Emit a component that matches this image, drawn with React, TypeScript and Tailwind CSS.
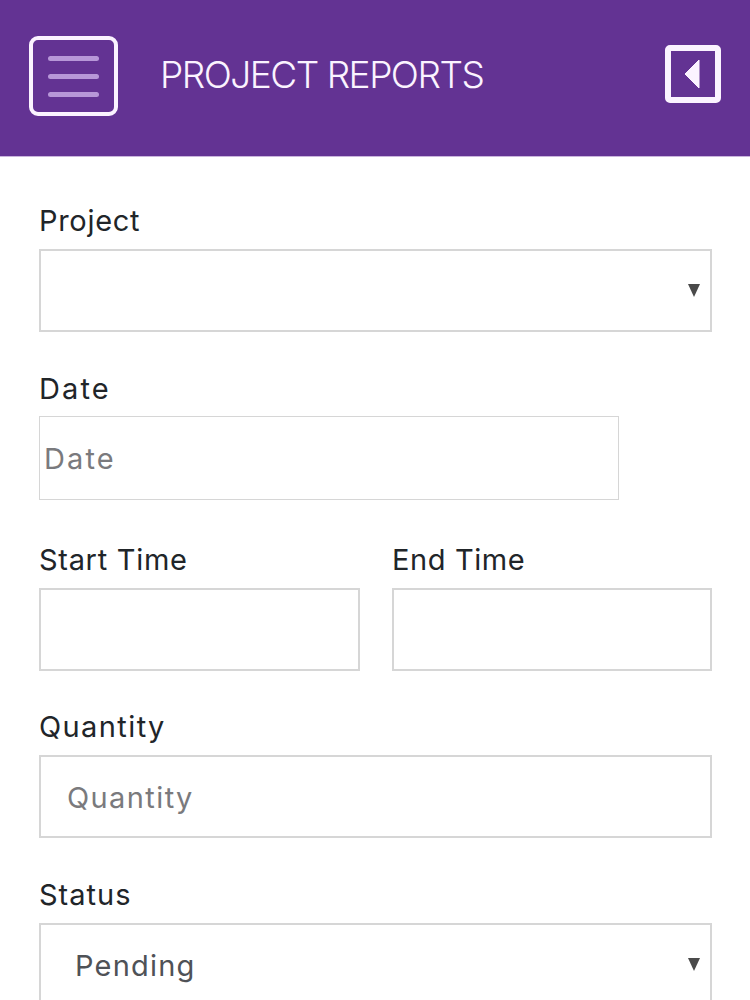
export default function App() {
  const label = "block h-[42px] text-[29px] leading-[44px] text-[#212529]";
  const box = "h-[83px] border-2 border-[#d6d6d6] bg-white flex items-center";
  const Caret = () => (
    <svg width="12" height="13" viewBox="0 0 12 13" className="ml-auto mr-[10px] shrink-0">
      <path d="M0 0H12L6 13Z" fill="#4a4a4a" />
    </svg>
  );
  return (
    <div className="w-[750px] h-[1000px] overflow-hidden bg-white font-['Inter','Liberation_Sans',sans-serif]">
      <header className="h-[157px] bg-[#633393] flex items-center border-b border-[#c9b4dc]">
        <div className="ml-[29px] w-[89px] h-[80px] rounded-[9px] border-[4px] border-[#fbf3ff] flex flex-col items-center justify-center gap-[13px] mt-[-4px]">
          <span className="w-[51px] h-[5px] rounded-full bg-[#b797d8]" />
          <span className="w-[51px] h-[5px] rounded-full bg-[#b797d8]" />
          <span className="w-[51px] h-[5px] rounded-full bg-[#b797d8]" />
        </div>
        <h1 className="ml-[42px] text-[37px] leading-none font-[350] text-[#fbf3ff] tracking-[-1.5px] mt-[-8px] whitespace-nowrap">PROJECT REPORTS</h1>
        <div className="ml-auto mr-[29px] mt-[-9px] w-[56px] h-[58px] rounded-[5px] border-[6px] border-[#fbf3ff] flex items-center justify-center">
          <svg width="16" height="30" viewBox="0 0 16 30" className="mr-[2px]">
            <path d="M15 1V29L1 15Z" fill="#fbf3ff" stroke="#fbf3ff" strokeLinejoin="round" />
          </svg>
        </div>
      </header>
      <main className="pl-[39px] pr-[38px] pt-[42px] flex flex-col">
        <label className={`${label} tracking-[0.7px]`}>Project</label>
        <div className={`${box} mt-[8px]`}><Caret /></div>

        <label className={`${label} mt-[35px] tracking-[2.1px]`}>Date</label>
        <div className={`${box} h-[84px] w-[580px] mt-[7px] border-[1.5px] pl-[4px]`}>
          <span className="mt-[2px] text-[29px] text-[#7a7a7d] tracking-[2.1px]">Date</span>
        </div>

        <div className="flex gap-[32px] mt-[38px]">
          <div className="w-[321px]">
            <label className={`${label} tracking-[0.7px]`}>Start Time</label>
            <div className={`${box} mt-[8px]`} />
          </div>
          <div className="w-[320px]">
            <label className={`${label} tracking-[0.6px]`}>End Time</label>
            <div className={`${box} mt-[8px]`} />
          </div>
        </div>

        <label className={`${label} mt-[34px] tracking-[1.4px]`}>Quantity</label>
        <div className={`${box} mt-[8px] pl-[26px]`}>
          <span className="mt-[2px] text-[29px] text-[#7a7a7d] tracking-[1.4px]">Quantity</span>
        </div>

        <label className={`${label} mt-[35px] tracking-[1px]`}>Status</label>
        <div className={`${box} mt-[8px] pl-[34px]`}>
          <span className="mt-[2px] text-[29px] text-[#4f5257] tracking-[1.2px]">Pending</span>
          <Caret />
        </div>
      </main>
    </div>
  );
}
